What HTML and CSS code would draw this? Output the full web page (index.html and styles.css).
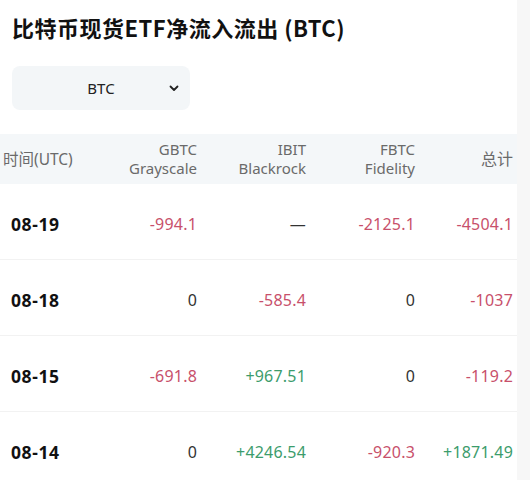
FILE: index.html
```html
<!DOCTYPE html>
<html lang="zh">
<head>
<meta charset="utf-8">
<link rel="stylesheet" href="styles.css">
</head>
<body>
<div class="page">
  <div class="content">
    <h1 class="title">比特币现货ETF净流入流出 (BTC)</h1>
    <div class="select">
      <span class="select-label">BTC</span>
      <svg class="chev" width="10" height="7" viewBox="0 0 10 7"><path d="M1.5 1.5 L5 5 L8.5 1.5" fill="none" stroke="#222" stroke-width="1.8" stroke-linecap="round" stroke-linejoin="round"/></svg>
    </div>
    <div class="table">
      <div class="row head">
        <div class="cell first">时间(UTC)</div>
        <div class="cell">GBTC<br>Grayscale</div>
        <div class="cell">IBIT<br>Blackrock</div>
        <div class="cell">FBTC<br>Fidelity</div>
        <div class="cell total">总计</div>
      </div>
      <div class="row">
        <div class="cell date">08-19</div>
        <div class="cell neg">-994.1</div>
        <div class="cell">—</div>
        <div class="cell neg">-2125.1</div>
        <div class="cell neg">-4504.1</div>
      </div>
      <div class="row">
        <div class="cell date">08-18</div>
        <div class="cell">0</div>
        <div class="cell neg">-585.4</div>
        <div class="cell">0</div>
        <div class="cell neg">-1037</div>
      </div>
      <div class="row">
        <div class="cell date">08-15</div>
        <div class="cell neg">-691.8</div>
        <div class="cell pos">+967.51</div>
        <div class="cell">0</div>
        <div class="cell neg">-119.2</div>
      </div>
      <div class="row">
        <div class="cell date">08-14</div>
        <div class="cell">0</div>
        <div class="cell pos">+4246.54</div>
        <div class="cell neg">-920.3</div>
        <div class="cell pos">+1871.49</div>
      </div>
    </div>
  </div>
  <div class="rail"></div>
</div>
</body>
</html>
```
FILE: styles.css
```css
* { box-sizing: border-box; }
html, body { margin: 0; padding: 0; background: #fff; }
body {
  font-family: "Noto Sans", "Noto Sans CJK SC", sans-serif;
  color: #1a1a1a;
  overflow: hidden;
}
.page {
  display: flex;
  width: 530px;
  height: 480px;
  overflow: hidden;
}
.content {
  width: 517px;
  flex: none;
}
.rail {
  flex: 1;
  background: #f7f7f7;
}
.title {
  margin: 0;
  padding: 13px 0 0 12px;
  height: 66px;
  font-family: "Noto Sans CJK SC", sans-serif;
  font-size: 22px;
  line-height: 28px;
  font-weight: 700;
  color: #111;
  letter-spacing: 0.5px;
}
.select {
  margin-left: 12px;
  width: 178px;
  height: 44px;
  background: #f3f6f8;
  border-radius: 8px;
  display: flex;
  align-items: center;
  position: relative;
}
.select-label {
  width: 100%;
  text-align: center;
  font-size: 15px;
  color: #222;
}
.chev {
  position: absolute;
  right: 11px;
  top: 19px;
}
.table {
  margin-top: 24px;
}
.row {
  display: grid;
  grid-template-columns: 93px 104px 109px 109px 98px;
  align-items: center;
  height: 76px;
  padding-top: 4px;
  border-bottom: 1px solid #f2f2f2;
}
.row:last-child { border-bottom: none; }
.row.head {
  height: 50px;
  padding-top: 0;
  background: #f4f7f9;
  border-bottom: none;
  font-size: 15px;
  line-height: 19px;
  color: #666;
}
.cell {
  text-align: right;
  font-size: 16px;
  letter-spacing: 0.2px;
  color: #333;
  white-space: nowrap;
}
.head .cell {
  color: #6a6a6a;
  font-size: 15px;
  letter-spacing: 0;
}
.head .cell.total {
  font-size: 16px;
}
.cell.first {
  text-align: left;
  padding-left: 3px;
  font-size: 15.5px;
}
.cell.date {
  text-align: left;
  padding-left: 11px;
  font-weight: 700;
  font-size: 17.5px;
  letter-spacing: 0.6px;
  color: #111;
}
.neg { color: #c8506b; }
.pos { color: #3c9c6c; }
```
